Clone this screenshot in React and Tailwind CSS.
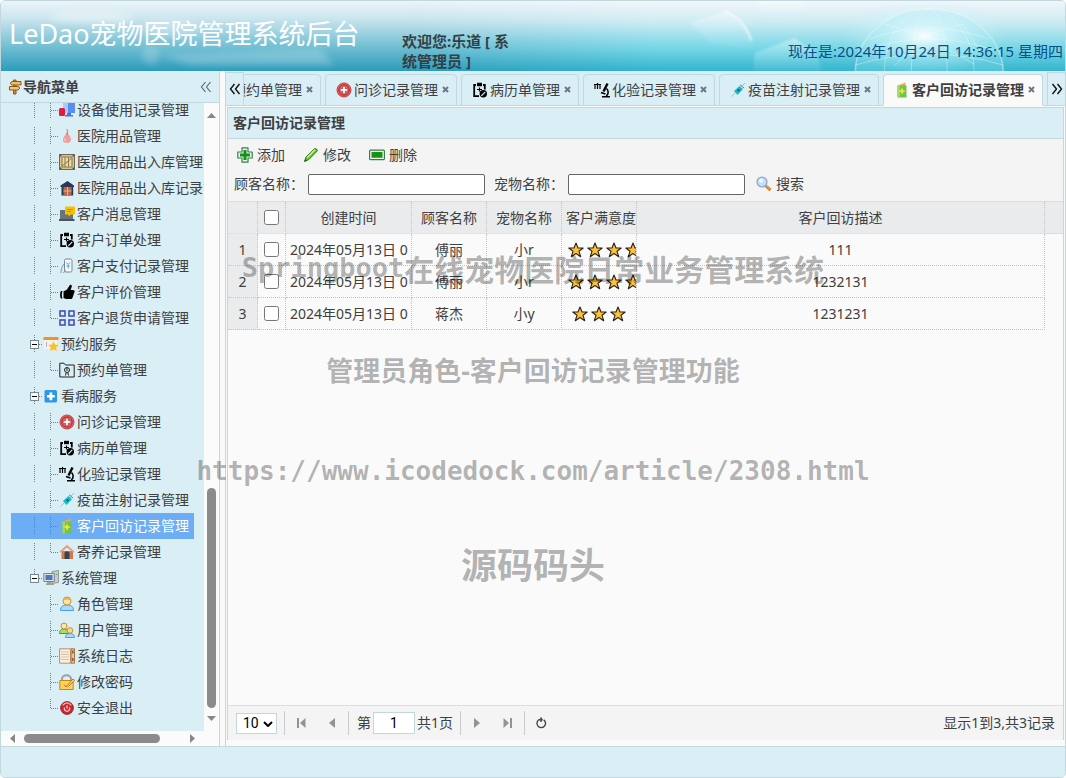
import React from "react";

const line = "border-[#c0d8de]";

/* ---------- 16px icons ---------- */
const art = {
  sign: (
    <g stroke="#8a5a1e" strokeWidth="1" fill="#f0bd6a">
      <path d="M6.500 1h2.500v14H6.500z" fill="#c98d42" />
      <path d="M5 2.500h9v3.500H5L3 4.300z" />
      <path d="M2.500 7.500h8.500l2 1.600-2 1.900H2.500z" fill="#f3c67e" />
    </g>
  ),
  device: (
    <g>
      <path d="M4 1h12v10H4z" fill="#5b8def" />
      <path d="M4 1h5v10H4z" fill="#a9c8ff" />
      <path d="M8 11h4v2H8zM6 13h8v1.500H6z" fill="#4c78d4" />
      <rect x="0" y="6" width="6" height="8" rx="1.500" fill="#e01b3c" />
    </g>
  ),
  drop: (
    <g>
      <path d="M8 .5c0 4 1 5 2.800 7.500 2 3 1.500 7-2.800 7S3.200 12 5 9c1.500-2.500 3-4 3-8.500z" fill="#ee9c9c" />
      <path d="M7.500 1c2 1.500 1 4 .5 6" stroke="#d77" fill="none" />
      <path d="M6 10c-.6 1.500 0 3 1.500 3.600" stroke="#fbd4d4" fill="none" />
    </g>
  ),
  crate: (
    <g>
      <rect x=".5" y=".5" width="15" height="15" fill="#d8c28a" stroke="#6c6a5c" />
      <path d="M3 3h10v10H3z" fill="#ecd9a4" stroke="#8d7b4d" />
      <path d="M6 3v10M9.500 3v10M3 12L13 4" stroke="#8d7b4d" fill="none" />
      <path d="M1 1h1.500v1.500H1zM13.500 1H15v1.500h-1.500zM1 13.500h1.500V15H1zM13.500 13.500H15V15h-1.500z" fill="#4b5560" />
    </g>
  ),
  store: (
    <g>
      <path d="M1.500 5.500L8.500 1l6.500 4.500V7h-.8v8.500H2.500V7h-1z" fill="#2c3656" />
      <path d="M4.500 7h8v8.500h-8z" fill="#b9694b" />
      <path d="M4.500 11h8M8.500 7v8.500" stroke="#eab094" />
    </g>
  ),
  message: (
    <g>
      <path d="M1 4h13v9.500H1z" fill="#68737c" />
      <path d="M0 13h15.500v2H0z" fill="#4b555e" />
      <path d="M6 .5h9c.6 0 1 .4 1 1v6c0 .6-.4 1-1 1h-3L9.500 10.500V8.500H6z" fill="#f9c000" />
      <path d="M8 3.500h6M8 5.500h4" stroke="#c98d00" />
    </g>
  ),
  clipboard: (
    <g fill="none" stroke="#000">
      <path d="M4 3H2.200v11.200H7M11 3h1.800v4.500" strokeWidth="1.800" />
      <path d="M5 .8h5v3.400H5z" fill="#000" stroke="none" />
      <path d="M5 7.500h5M7.500 5.500v4" strokeWidth="1.200" />
      <circle cx="11.300" cy="11.800" r="3.700" fill="#000" stroke="none" />
      <path d="M9.300 13.800l4-4" stroke="#dbeef4" strokeWidth="1.200" />
    </g>
  ),
  pay: (
    <g>
      <rect x="5.500" y="1" width="7.500" height="13" rx="1.500" fill="#f4f8fa" stroke="#7b8791" />
      <path d="M2 15c0-3 .8-6.500 3-9M4.500 15l2-3" stroke="#8c959c" fill="none" />
      <path d="M7.500 4.500l1.700 2 1.700-2M9.200 6.500v4M7.500 8h3.400" stroke="#5ba4e8" fill="none" />
    </g>
  ),
  thumb: (
    <path d="M1.800 7C.8 9.500.8 12 1.800 14.500h1.700C2.600 12 2.600 9.500 3.500 7zM4.500 7.500L8 5.500l2.700-4.300c.8-1 2.500 0 2.100 1.400L11.600 6H14c1.800 0 2 1.500 1.300 2.500L13.600 13.500c-.3 1-1 1.500-2 1.500H7l-2.500-1z" fill="#000" />
  ),
  grid: (
    <g fill="none" stroke="#4052c0" strokeWidth="1.600">
      <rect x="1" y="1" width="5" height="5" />
      <rect x="10" y="1" width="5" height="5" />
      <rect x="1" y="10" width="5" height="5" />
      <rect x="10" y="10" width="5" height="5" />
    </g>
  ),
  calendar: (
    <g>
      <path d="M1 1h13v12H1z" fill="#f4f1ee" />
      <path d="M0.500 1h15v3H.5z" fill="#f5931e" />
      <path d="M3.500 6v5" stroke="#9fb6dc" />
      <path d="M10.500 5.500l1.700 3 3.500.5-2.500 2.500.6 3.500-3.300-1.600L7.200 15l.6-3.500L5.300 9l3.500-.5z" fill="#fbc02d" />
    </g>
  ),
  folder: (
    <g fill="none" stroke="#222">
      <path d="M.8 15V1.200H5L6.500 3h8.700v12z" />
      <circle cx="8" cy="8" r="2.500" />
      <path d="M6.500 13.500l.7-3M9.500 13.500l-.7-3M8 6v3" />
    </g>
  ),
  cross: (
    <g>
      <rect x="1.500" y="2" width="12.500" height="12.500" rx="1.500" fill="#2f95e6" />
      <path d="M6.500 4.500h2.800V7h2.500v2.600H9.300v2.600H6.500V9.600H4V7h2.500z" fill="#fff" />
    </g>
  ),
  redcross: (
    <g>
      <circle cx="8" cy="8" r="7" fill="#ee5a5a" stroke="#c24446" strokeWidth="1" />
      <circle cx="8" cy="8" r="5.200" fill="none" stroke="#8a3036" strokeWidth=".8" />
      <path d="M6.800 4.200h2.400v2.600h2.600v2.400H9.200v2.600H6.800V9.200H4.200V6.800h2.600z" fill="#fff" stroke="#7f2a31" strokeWidth=".5" />
    </g>
  ),
  scope: (
    <g fill="none" stroke="#000">
      <path d="M1 2v5M3.500 1v6M6 2v5M0 2.500h7" strokeWidth="1.200" />
      <path d="M13.500 1.500L9.500 9.500" strokeWidth="2.400" />
      <path d="M12.500 6.500c2.500 2.500 2 5.500-.2 7.500M7 10.500l4.500 1.500M8 14.700h8" strokeWidth="1.600" />
    </g>
  ),
  syringe: (
    <g>
      <path d="M1.500 14.500l4-4M12 4l3-3" stroke="#a9b9bf" />
      <path d="M4 9l5.500-5 3.500 3-5.500 6z" fill="#17bccb" />
      <path d="M10 2.800l4 3.200" stroke="#5d7e8a" />
      <circle cx="8.600" cy="8.300" r="1.200" fill="#136f80" />
    </g>
  ),
  card: (
    <g>
      <path d="M4 3.500L11.500.5v4H4z" fill="#f2a93b" />
      <path d="M3.500 3.500h9v12h-9z" fill="#6cc551" />
      <path d="M3.500 3.500H6v12H3.500z" fill="#a1d95f" />
      <path d="M8 5.500l1.200 2.600L12 9l-2.600 1L8 13l-1.200-3L4 9l2.800-.9z" fill="#f6e13b" />
    </g>
  ),
  house: (
    <g>
      <path d="M2.500 7h11.500v8H2.500z" fill="#cf7a52" />
      <path d="M.5 7.500L8 .8l7.500 6.700-1.200 1.300L8 3.500 1.700 8.800z" fill="#ef9a76" />
      <path d="M5.500 15V9.500c0-3 5-3 5 0V15z" fill="#39434d" />
    </g>
  ),
  computer: (
    <g>
      <path d="M9 1.500L15.500.5v12L9 13.500z" fill="#c8ccce" stroke="#85898c" strokeWidth=".8" />
      <path d="M.8 3.500h10.500v8H.8z" fill="#e0e3e4" stroke="#7e8386" />
      <path d="M2.500 5h7v5h-7z" fill="#4a78c2" />
      <path d="M4 12h4.500v1.500H11V15H3v-1.500h1z" fill="#9da1a3" />
      <path d="M13 4.500h1.500" stroke="#3bb54a" />
    </g>
  ),
  user: (
    <g>
      <path d="M1.500 14.500c0-4 2.500-5.500 6.500-5.500s6.500 1.500 6.500 5.500z" fill="#a9d9fb" stroke="#4a9ee0" />
      <circle cx="8" cy="5" r="4" fill="#fce3b2" stroke="#c98f2f" />
      <path d="M4 4.500c1-4 7-4 8 0C10 3.500 6 3.500 4 4.500z" fill="#eeb548" />
    </g>
  ),
  users: (
    <g>
      <path d="M.5 11.500c0-3.500 2-4.500 4.500-4.500S9.500 8 9.500 11.500z" fill="#a6dd63" stroke="#539a24" />
      <circle cx="5" cy="4" r="3" fill="#fce3b2" stroke="#c98f2f" />
      <path d="M6.500 15.500c0-3 2-4 4.500-4s4.500 1 4.500 4z" fill="#a9d9fb" stroke="#4a9ee0" />
      <circle cx="11" cy="8.500" r="2.800" fill="#fbd592" stroke="#c98f2f" />
    </g>
  ),
  log: (
    <g>
      <path d="M.6.800h11v14.400H.6z" fill="#fbeedd" stroke="#b39274" />
      <path d="M2 4h8M2 6.500h8M2 9h8M2 11.500h8" stroke="#dcc0a6" />
      <path d="M12 .8h3.500v14.400H12z" fill="#e6c29f" stroke="#a4754a" />
      <path d="M13.800 2.500v3M13.800 10v3" stroke="#7e4c28" strokeWidth="1.300" />
    </g>
  ),
  lock: (
    <g>
      <path d="M3 8V5c0-5 9-5 9 0v3" fill="none" stroke="#9aa0a4" strokeWidth="2" />
      <path d="M.8 6.500h13.400v9H.8z" fill="#fbd35c" stroke="#bf8a17" />
      <path d="M5 10.500l2 2.500 7-8 1.500 1.300-7 7" fill="#fce69b" stroke="#a8690c" strokeWidth=".9" />
    </g>
  ),
  exit: (
    <g>
      <circle cx="8" cy="8" r="6.400" fill="#d0262f" stroke="#7d2026" strokeWidth=".8" />
      <path d="M3.800 5.300c2-3 6.400-3 8.400 0" stroke="#f5a5a8" fill="none" strokeWidth="1.400" />
      <path d="M5.300 7.500c-.6 5 6 5 5.400 0M8 5.500v3" fill="none" stroke="#fbdada" strokeWidth="1.200" />
    </g>
  ),
  add: (
    <g>
      <path d="M5 .8h6V5h4.200v6H11v4.200H5V11H.8V5H5z" fill="#e9f7e9" stroke="#3a7d4d" strokeWidth="1.200" strokeLinejoin="round" />
      <path d="M6.500 3h3v3.500H13v3H9.500V13h-3V9.500H3v-3h3.500z" fill="#159315" />
    </g>
  ),
  edit: (
    <g>
      <path d="M1.500 14.500l1.500-4.500L11.500 1.800c1-1 3.500 1 2.600 2.300L5.800 12.600z" fill="#5fc224" stroke="#2f7d14" />
      <path d="M4 10.800l8-8" stroke="#d3f5b4" strokeWidth="1.300" />
      <path d="M1.500 14.500l.8-2.300 1.500 1.500z" fill="#1f4d10" />
    </g>
  ),
  remove: (
    <g>
      <rect x=".6" y="3.100" width="14.800" height="9.600" rx="1" fill="#f2faf2" stroke="#3a7d4d" strokeWidth="1.200" />
      <path d="M2.500 5h11v5.700h-11z" fill="#159315" />
    </g>
  ),
  search: (
    <g>
      <path d="M9.500 9.500l5 4.700" stroke="#c9772a" strokeWidth="3" />
      <path d="M10 9.500l4.500 4.200" stroke="#f5be73" strokeWidth="1" />
      <circle cx="6" cy="6" r="4.900" fill="#bfe0fb" stroke="#96a9c9" strokeWidth="1.400" />
      <circle cx="5" cy="4.800" r="2" fill="#eef8ff" />
    </g>
  ),
  star: (
    <path d="M8 1l2 5h5.200l-4.200 3.300 1.700 5.400L8 11.500l-4.700 3.200L5 9.300.8 6H6z" fill="#fdc03b" stroke="#2b2412" strokeWidth="1.100" strokeLinejoin="round" />
  ),
};

function Icon({ name }) {
  return (
    <svg viewBox="0 0 16 16" className="block size-4 shrink-0" aria-hidden="true">
      {art[name]}
    </svg>
  );
}

/* ---------- header ---------- */
function Banner() {
  return (
    <svg className="absolute inset-0 h-full w-full" viewBox="0 0 1066 70" preserveAspectRatio="none" aria-hidden="true">
      <defs>
        <linearGradient id="base" x1="0" x2="0" y1="0" y2="1">
          <stop offset="0" stopColor="#ecf5f9" />
          <stop offset=".25" stopColor="#cbe5ee" />
          <stop offset=".6" stopColor="#7cc4d7" />
          <stop offset="1" stopColor="#2c9bbb" />
        </linearGradient>
        <linearGradient id="cyan" x1="0" x2="0" y1="0" y2="1">
          <stop offset="0" stopColor="#f2f6fa" />
          <stop offset=".3" stopColor="#cdebf3" />
          <stop offset=".7" stopColor="#6fd5e5" />
          <stop offset="1" stopColor="#35b4cf" />
        </linearGradient>
        <linearGradient id="fade" x1="0" x2="1" y1="0" y2="0">
          <stop offset=".38" stopColor="#000" />
          <stop offset=".62" stopColor="#fff" />
          <stop offset="1" stopColor="#fff" />
        </linearGradient>
        <mask id="right">
          <rect width="1066" height="70" fill="url(#fade)" />
        </mask>
        <radialGradient id="glow">
          <stop offset="0" stopColor="#fff" stopOpacity=".95" />
          <stop offset=".3" stopColor="#e4fbff" stopOpacity=".6" />
          <stop offset="1" stopColor="#bff2f8" stopOpacity="0" />
        </radialGradient>
        <linearGradient id="cube" x1="0" x2="0" y1="0" y2="1">
          <stop offset="0" stopColor="#fff" stopOpacity=".4" />
          <stop offset="1" stopColor="#bff0f7" stopOpacity=".1" />
        </linearGradient>
        <filter id="soft" x="-20%" y="-50%" width="140%" height="200%">
          <feGaussianBlur stdDeviation="3" />
        </filter>
        <filter id="edge" x="-10%" y="-10%" width="120%" height="120%">
          <feGaussianBlur stdDeviation="1" />
        </filter>
      </defs>
      <rect width="1066" height="70" fill="url(#base)" />
      <rect width="1066" height="70" fill="url(#cyan)" mask="url(#right)" />
      <g filter="url(#soft)" fill="#fff">
        <ellipse cx="90" cy="16" rx="42" ry="6" opacity=".35" />
        <ellipse cx="170" cy="27" rx="30" ry="8" opacity=".22" />
        <ellipse cx="150" cy="54" rx="9" ry="9" opacity=".2" />
        <path d="M160 54l160-6 14 16H190z" opacity=".22" />
      </g>
      <g filter="url(#edge)">
        <path d="M690 22l35-12 22 17 6 20-40-4z" fill="url(#cube)" />
        <path d="M725 10q20 8 27 30" fill="none" stroke="#fff" strokeOpacity=".7" strokeWidth="2" />
        <path d="M757 0h45l4 10-25 13-20-11z" fill="url(#cube)" />
        <path d="M755 52l40-15 22 14 5 19h-68z" fill="url(#cube)" />
      </g>
      <ellipse cx="930" cy="70" rx="75" ry="62" fill="#8fe6f0" opacity=".3" />
      <g fill="none" stroke="#fff" strokeOpacity=".35">
        <ellipse cx="930" cy="72" rx="74" ry="64" strokeWidth="1.500" />
        <ellipse cx="930" cy="72" rx="45" ry="64" />
        <ellipse cx="930" cy="72" rx="18" ry="64" />
        <path d="M862 50q68-24 136 0M870 38q60-22 120 0M856 64q74-22 148 0" />
        <path d="M885 23l40 12 38-12M925 35l-30 30M925 35l50 28M963 23l20 30" />
      </g>
      <ellipse cx="925" cy="35" rx="85" ry="38" fill="url(#glow)" />
    </svg>
  );
}

function Header() {
  return (
    <header className="relative flex h-[70px] shrink-0 overflow-hidden">
      <Banner />
      <h1 className="relative w-[401px] shrink-0 pt-[13px] pl-2 text-[27px] leading-[40px] whitespace-nowrap text-white">
        LeDao宠物医院管理系统后台
      </h1>
      <p className="relative w-[120px] shrink-0 pt-[30px] text-[15px] leading-5 font-bold text-[#333f44]">
        欢迎您:乐道 [ 系<br />统管理员 ]
      </p>
      <p className="relative ml-auto pt-[40px] pr-0.5 text-[15px] leading-5 whitespace-nowrap text-[#0c4f86]">
        现在是:2024年10月24日 14:36:15 星期四
      </p>
    </header>
  );
}

/* ---------- navigation tree ---------- */
const nodes = [
  { t: "设备使用记录管理", i: "device", g: "|" },
  { t: "医院用品管理", i: "drop", g: "|" },
  { t: "医院用品出入库管理", i: "crate", g: "|" },
  { t: "医院用品出入库记录管理", i: "store", g: "|" },
  { t: "客户消息管理", i: "message", g: "|" },
  { t: "客户订单处理", i: "clipboard", g: "|" },
  { t: "客户支付记录管理", i: "pay", g: "|" },
  { t: "客户评价管理", i: "thumb", g: "|" },
  { t: "客户退货申请管理", i: "grid", g: "|", end: true },
  { t: "预约服务", i: "calendar", parent: true },
  { t: "预约单管理", i: "folder", g: "|", end: true },
  { t: "看病服务", i: "cross", parent: true },
  { t: "问诊记录管理", i: "redcross", g: "|" },
  { t: "病历单管理", i: "clipboard", g: "|" },
  { t: "化验记录管理", i: "scope", g: "|" },
  { t: "疫苗注射记录管理", i: "syringe", g: "|" },
  { t: "客户回访记录管理", i: "card", g: "|", on: true },
  { t: "寄养记录管理", i: "house", g: "|", end: true },
  { t: "系统管理", i: "computer", parent: true, last: true },
  { t: "角色管理", i: "user" },
  { t: "用户管理", i: "users" },
  { t: "系统日志", i: "log" },
  { t: "修改密码", i: "lock" },
  { t: "安全退出", i: "exit", end: true },
];

function Guide({ d }) {
  return (
    <svg viewBox="0 0 16 18" className="block h-[18px] w-4 shrink-0" aria-hidden="true">
      <path d={d} fill="none" stroke="#6d8087" strokeDasharray="1 1" />
    </svg>
  );
}

function Expander({ last }) {
  return (
    <button type="button" aria-label="折叠" className="block w-4 shrink-0">
      <svg viewBox="0 0 16 18" className="block h-[18px] w-4">
        <path d={last ? "M7.500 0v5M12 9.500h4" : "M7.500 0v5M7.500 14v4M12 9.500h4"} fill="none" stroke="#6d8087" strokeDasharray="1 1" />
        <rect x="3.500" y="5.500" width="8" height="8" fill="#f5fafc" stroke="#7b878c" />
        <path d="M5 9.500h5" stroke="#000" />
      </svg>
    </button>
  );
}

function Tree() {
  return (
    <ul className="-mt-1.5 pl-2.5">
      {nodes.map((n) => (
        <li
          key={n.t}
          className={
            "flex h-[26px] w-[183px] items-center pl-4 whitespace-nowrap " + (n.on ? "bg-[#6cadf5] text-white" : "")
          }
        >
          {n.parent ? (
            <Expander last={n.last} />
          ) : (
            <>
              <Guide d={n.g ? "M7.500 0v18" : ""} />
              <Guide d={n.end ? "M7.500 0v9.500M8 9.500h8" : "M7.500 0v18M8 9.500h8"} />
            </>
          )}
          <Icon name={n.i} />
          <a href="#" className="pl-0.5">
            {n.t}
          </a>
        </li>
      ))}
    </ul>
  );
}

function Arrow({ d }) {
  return (
    <svg viewBox="0 0 9 9" className="size-[9px] shrink-0" aria-hidden="true">
      <path d={d} fill="#878787" />
    </svg>
  );
}

function Sidebar() {
  return (
    <aside className={"flex w-[219px] shrink-0 flex-col border-r bg-[#daeef5] " + line}>
      <div className={"flex h-8 shrink-0 items-center border-b px-1.5 " + line}>
        <Icon name="sign" />
        <h2 className="font-bold">导航菜单</h2>
        <button type="button" aria-label="收起" className="mr-px ml-auto">
          <svg viewBox="0 0 12 12" className="size-3" fill="none" stroke="#5b6a72" strokeWidth="1.200">
            <path d="M5.500 1L1.500 6l4 5M10.500 1l-4 5 4 5" />
          </svg>
        </button>
      </div>
      <div className="flex min-h-0 flex-1">
        <nav className="min-w-0 flex-1 overflow-hidden">
          <Tree />
        </nav>
        <div className="flex w-[15px] flex-col items-center bg-[#fbfbfb] py-2">
          <Arrow d="M0 7l4.500-5L9 7z" />
          <div className="flex-[368]" />
          <div className="mb-1.5 w-[9px] flex-[220] rounded-full bg-[#8b8b8b]" />
          <Arrow d="M0 2l4.500 5L9 2z" />
        </div>
      </div>
      <div className="flex h-[15px] shrink-0 items-center bg-[#fbfbfb] pr-[22px] pl-2">
        <Arrow d="M6 0L1 4.500 6 9z" />
        <div className="w-1.5" />
        <div className="h-[9px] flex-[137] rounded-full bg-[#8b8b8b]" />
        <div className="flex-[28]" />
        <Arrow d="M2 0l5 4.500L2 9z" />
      </div>
    </aside>
  );
}

/* ---------- tabs ---------- */
const tabs = [
  { t: "预约单管理", i: "folder" },
  { t: "问诊记录管理", i: "redcross" },
  { t: "病历单管理", i: "clipboard" },
  { t: "化验记录管理", i: "scope" },
  { t: "疫苗注射记录管理", i: "syringe" },
  { t: "客户回访记录管理", i: "card", on: true },
];

function Scroller({ label, d, side }) {
  return (
    <button
      type="button"
      aria-label={label}
      className={"flex w-[18px] shrink-0 items-center justify-center border-t bg-[#daeef5] " + side + " " + line}
    >
      <svg viewBox="0 0 12 12" className="size-3" fill="none" stroke="#111" strokeWidth="1.400">
        <path d={d} />
      </svg>
    </button>
  );
}

function TabBar() {
  return (
    <div className={"flex h-[35px] shrink-0 border-b bg-[#daeef5] pt-px " + line}>
      <Scroller label="向左" d="M5.500 1L1.500 6l4 5M10.500 1l-4 5 4 5" side="border-r" />
      <div className="-mb-px flex min-w-0 flex-1 items-end justify-end gap-1 overflow-hidden pr-1">
        {tabs.map((x) => (
          <div
            key={x.t}
            className={
              "flex h-8 shrink-0 items-center rounded-t-sm border pr-1.5 pl-2.5 " +
              line +
              (x.on ? " border-b-[#fafafa] bg-[#fafafa] font-bold" : "")
            }
          >
            <button type="button" className="flex items-center gap-0.5 whitespace-nowrap">
              <Icon name={x.i} />
              {x.t}
            </button>
            <button type="button" aria-label="关闭" className="pl-1">
              <svg viewBox="0 0 8 8" className="block w-2" stroke="#6e7689" strokeWidth="2">
                <path d="M1 1l5 5M6 1L1 6" />
              </svg>
            </button>
          </div>
        ))}
      </div>
      <Scroller label="向右" d="M1.500 1l4 5-4 5M6.500 1l4 5-4 5" side="border-l" />
    </div>
  );
}

/* ---------- grid ---------- */
const rows = [
  { date: "2024年05月13日 0", who: "傅丽", pet: "小r", stars: 5, note: "111" },
  { date: "2024年05月13日 0", who: "傅丽", pet: "小r", stars: 5, note: "1232131" },
  { date: "2024年05月13日 0", who: "蒋杰", pet: "小y", stars: 3, note: "1231231" },
];

const dot = "border-r border-dotted border-r-[#c4c4c4]";
const cell = dot + " overflow-hidden p-0 px-1 text-center font-normal whitespace-nowrap";

function ToolButton({ icon, children }) {
  return (
    <button type="button" className="flex h-[26px] items-center gap-1 px-[9px]">
      <Icon name={icon} />
      {children}
    </button>
  );
}

function Field({ id, children }) {
  return (
    <div className="flex items-center gap-1">
      <label htmlFor={id}>{children}</label>
      <input id={id} type="text" className="h-[21px] w-[177px] rounded-[2px] border border-[#666] bg-white px-1" />
    </div>
  );
}

function Toolbar() {
  return (
    <div className="h-[63px] shrink-0 border-b border-[#ddd] bg-[#f4f4f4] pt-[3px]">
      <div className="flex">
        <ToolButton icon="add">添加</ToolButton>
        <ToolButton icon="edit">修改</ToolButton>
        <ToolButton icon="remove">删除</ToolButton>
      </div>
      <form className="flex h-8 items-center gap-[9px] pl-1.5">
        <Field id="customer">顾客名称：</Field>
        <Field id="pet">宠物名称：</Field>
        <div className="-ml-[7px]">
          <ToolButton icon="search">搜索</ToolButton>
        </div>
      </form>
    </div>
  );
}

function Grid() {
  return (
    <div className="min-h-0 flex-1 overflow-hidden">
      <table className="w-full table-fixed border-separate border-spacing-0">
        <colgroup>
          <col className="w-[30px]" />
          <col className="w-[28px]" />
          <col className="w-[126px]" />
          <col className="w-[75px]" />
          <col className="w-[75px]" />
          <col className="w-[75px]" />
          <col />
          <col className="w-[18px]" />
        </colgroup>
        <thead className="bg-[#e9ebec]">
          <tr className="h-8 [&>*]:border-b [&>*]:border-b-[#d9dcdd]">
            <td className={dot} />
            <td className={dot + " p-0"}>
              <input type="checkbox" aria-label="全选" className="mx-auto block size-[15px]" />
            </td>
            <th className={cell}>创建时间</th>
            <th className={cell}>顾客名称</th>
            <th className={cell}>宠物名称</th>
            <th className={cell}>客户满意度</th>
            <th className={cell}>客户回访描述</th>
            <td />
          </tr>
        </thead>
        <tbody>
          {rows.map((r, i) => (
            <tr
              key={i}
              className="h-8 [&>td:not(:last-child)]:border-b [&>td:not(:last-child)]:border-dotted [&>td:not(:last-child)]:border-b-[#c4c4c4]"
            >
              <td className={cell + " bg-[#e9ebec]"}>{i + 1}</td>
              <td className={dot + " p-0"}>
                <input type="checkbox" aria-label={"选择第" + (i + 1) + "行"} className="mx-auto block size-[15px]" />
              </td>
              <td className={cell}>{r.date}</td>
              <td className={cell}>{r.who}</td>
              <td className={cell}>{r.pet}</td>
              <td className={cell}>
                <div className="mx-auto flex w-max gap-[3px] px-0.5">
                  {Array.from({ length: r.stars }, (_, k) => (
                    <Icon key={k} name="star" />
                  ))}
                </div>
              </td>
              <td className={cell}>{r.note}</td>
              <td />
            </tr>
          ))}
        </tbody>
      </table>
    </div>
  );
}

function PageButton({ label, d, stroke }) {
  return (
    <button type="button" aria-label={label} className="flex h-6 w-[30px] items-center justify-center">
      <svg viewBox="0 0 12 12" className="size-3">
        {stroke ? <path d={d} fill="none" stroke="#4b4646" strokeWidth="1.400" /> : <path d={d} fill="#939393" />}
      </svg>
    </button>
  );
}

function Divider() {
  return <div className="mr-px ml-0.5 h-6 w-px bg-[#ccc]" />;
}

function Pager() {
  return (
    <div className="flex h-[35px] shrink-0 items-center border-t border-[#ddd] bg-[#f4f4f4] px-2">
      <div className="relative mr-[5px]">
        <select
          aria-label="每页条数"
          className={"block h-[21px] w-[41px] appearance-none border bg-white pl-1.5 font-['Roboto'] leading-[19px] text-black " + line}
        >
          <option>10</option>
          <option>20</option>
        </select>
        <svg viewBox="0 0 10 6" className="pointer-events-none absolute top-2 right-1 w-2.5" fill="none" stroke="#000" strokeWidth="2">
          <path d="M1 1l4 4 4-4" />
        </svg>
      </div>
      <Divider />
      <PageButton label="首页" d="M2 1h2v10H2zM10.500 1v10L5 6z" />
      <PageButton label="上一页" d="M10 1v10L4 6z" />
      <Divider />
      <label htmlFor="page" className="pr-0.5 pl-[7px]">
        第
      </label>
      <input
        id="page"
        type="text"
        defaultValue="1"
        className={"h-[22px] w-[42px] border bg-white text-center font-['Roboto'] text-black " + line}
      />
      <span className="pr-[5px] pl-0.5">共1页</span>
      <Divider />
      <PageButton label="下一页" d="M3 1v10l6-5z" />
      <PageButton label="末页" d="M2.500 1v10L8 6zM9 1h2v10H9z" />
      <Divider />
      <PageButton label="刷新" stroke d="M8.700 2.800a4.300 4.300 0 1 1-4.400-.3M3.500 2.800H6.800M5.500 .5l1.600 2.300-1.600 2" />
      <span className="ml-auto">显示1到3,共3记录</span>
    </div>
  );
}

function Watermark() {
  return (
    <div className="pointer-events-none absolute inset-x-0 top-[247px] flex flex-col font-bold whitespace-nowrap text-black/30">
      <div className="flex items-center justify-center font-['DejaVu_Sans_Mono'] text-[27px] leading-[40px]">
        Springboot
        <span className="font-['Noto_Sans_CJK_SC'] text-[30px]">在线宠物医院日常业务管理系统</span>
      </div>
      <div className="mt-[63px] text-center text-[27px] leading-[40px]">管理员角色-客户回访记录管理功能</div>
      <div className="mt-[60px] text-center font-['DejaVu_Sans_Mono'] text-[26px] leading-[40px]">
        https://www.icodedock.com/article/2308.html
      </div>
      <div className="mt-[50px] text-center text-[36px] leading-[50px]">源码码头</div>
    </div>
  );
}

export default function App() {
  return (
    <div
      className={
        "relative flex h-screen flex-col overflow-hidden rounded-[5px] border bg-[#fafafa] font-['Noto_Sans','Noto_Sans_CJK_SC',sans-serif] text-[14px] leading-5 text-[#404040] " +
        line
      }
    >
      <Header />
      <div className="flex min-h-0 flex-1 gap-[5px]">
        <Sidebar />
        <main className={"flex min-w-0 flex-1 flex-col border-l " + line}>
          <TabBar />
          <section className={"mx-px mt-px mb-1.5 flex min-h-0 flex-1 flex-col border-x border-t " + line}>
            <h2 className={"h-[31px] shrink-0 border-b bg-[#daeef5] pl-[5px] leading-[30px] font-bold " + line}>
              客户回访记录管理
            </h2>
            <Toolbar />
            <Grid />
            <Pager />
          </section>
        </main>
      </div>
      <footer className={"h-[31px] shrink-0 border-t bg-[#daeef5] " + line} />
      <Watermark />
    </div>
  );
}
